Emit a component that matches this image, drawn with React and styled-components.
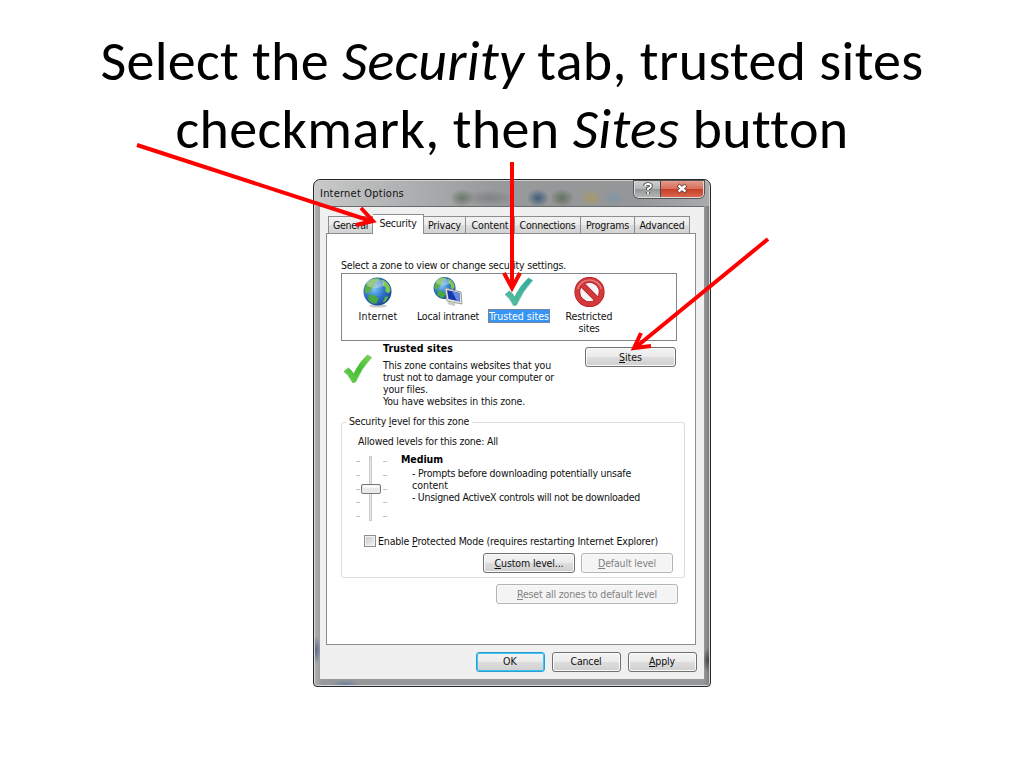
import { useLayoutEffect, useRef } from 'react';
import styled, { createGlobalStyle, css } from 'styled-components';

const GlobalStyle = createGlobalStyle`
    * {
        box-sizing: border-box;
    }
    body {
        margin: 0;
        background: #fff;
        overflow: hidden;
    }
`;

const Slide = styled.main`
    position: relative;
    width: 1024px;
    height: 768px;
    padding-top: 27px;
    background: #fff;
    display: flex;
    flex-direction: column;
    align-items: center;
    color: #000;
`;

const Title = styled.h1`
    margin: 0 0 16px;
    height: 136px;
    font: 400 56px/68px Carlito, Lato, sans-serif;
    text-align: center;
`;

const TitleLine = styled.div`
    height: 68px;
    white-space: pre;
`;

const FitSpan = styled.span`
    display: inline-block;
    white-space: pre;
`;

const Dialog = styled.section`
    width: 398px;
    height: 508px;
    padding: 0 6px 7px;
    border: 1px solid #25292c;
    border-radius: 7px 7px 4px 4px;
    box-shadow: inset 0 0 0 1px #d5d7d8;
    background:
        radial-gradient(ellipse 5px 14px at 2px 470px, #59698a, transparent),
        radial-gradient(ellipse 5px 12px at 394px 480px, #444, transparent),
        radial-gradient(ellipse 14px 4px at 32px 504px, #6d83a0, transparent),
        linear-gradient(90deg, #b0b2b3, #979899 8px, #979899 390px, #747677);
    font: 10.5px/10px "DejaVu Sans Condensed", "DejaVu Sans", sans-serif;
    color: #111;
`;

const TitleBar = styled.header`
    height: 26px;
    margin: 0 -5px;
    padding-left: 5px;
    display: flex;
    justify-content: space-between;
    border-top: 1px solid #d0d0d0;
    border-radius: 6px 6px 0 0;
    background:
        radial-gradient(ellipse 12px 9px at 147px 17px, #6a776b, transparent),
        radial-gradient(ellipse 28px 8px at 174px 17px, #808285, transparent),
        radial-gradient(ellipse 11px 9px at 223px 17px, #3e5d79, transparent),
        radial-gradient(ellipse 12px 9px at 247px 17px, #62715e, transparent),
        radial-gradient(ellipse 11px 9px at 276px 17px, #a89a68, transparent),
        radial-gradient(ellipse 10px 8px at 299px 17px, #7e98a6, transparent),
        linear-gradient(90deg, #c8c9c9, #aeb0b1 90px, #97999a 180px, #949697 320px, #a8aaab);
`;

const DialogTitle = styled.div`
    padding-top: 6px;
    font-size: 11px;
    line-height: 13px;
`;

const Controls = styled.div`
    display: flex;
    height: 17px;
    margin: 0 5px 0 0;
    border: 1px solid #ddd;
    border-top: 0;
    border-radius: 0 0 5px 5px;
    overflow: hidden;
    box-shadow: 0 0 0 1px #555;
`;

const Control = styled.span`
    width: ${({ $close }) => ($close ? 43 : 25)}px;
    display: flex;
    align-items: center;
    justify-content: center;
    border-left: ${({ $close }) => ($close ? '1px solid #544' : '0')};
    background: ${({ $close }) => ($close
        ? 'linear-gradient(#e39c8c, #d8705a 47%, #c63e25 50%, #d9664d)'
        : 'linear-gradient(#cfd0d0, #b5b7b8 47%, #929596 50%, #b2b5b6)')};
    svg {
        margin-top: -2px;
    }
`;

const Client = styled.div`
    height: 473px;
    padding: 7px 7px 0 6px;
    border-top: 1px solid #686b6d;
    background: #f0f0f0;
`;

const Tabs = styled.div`
    height: 19px;
    padding-left: 2px;
    display: flex;
    align-items: flex-end;
`;

const Tab = styled.div`
    width: ${({ $w }) => $w}px;
    height: 17px;
    display: flex;
    align-items: center;
    justify-content: center;
    border: 1px solid #8b8d91;
    border-left-width: ${({ $first }) => ($first ? 1 : 0)}px;
    border-bottom: 0;
    background: linear-gradient(#f2f2f2, #ebebeb 48%, #dedede 52%, #d2d2d2);
    ${({ $active }) => $active && css`
        position: relative;
        height: 20px;
        margin-bottom: -1px;
        padding: 0 0 3px;
        background: #fff;
    `}
`;

const Panel = styled.div`
    width: 370px;
    height: 412px;
    padding: 26px 10px 0 14px;
    border: 1px solid #8b8d91;
    background: #fff;
`;

const ZoneList = styled.div`
    width: 336px;
    height: 68px;
    margin-top: 1px;
    padding: 3px 0 0 1px;
    display: flex;
    border: 1px solid #85878b;
    line-height: 12px;
`;

const Zone = styled.div`
    width: ${({ $w = 70 }) => $w}px;
    display: flex;
    flex-direction: column;
    align-items: center;
    svg {
        display: block;
        margin-bottom: 1px;
    }
`;

const ZoneLabel = styled.div`
    height: ${({ $selected }) => ($selected ? 14 : 12)}px;
    padding: ${({ $selected }) => ($selected ? '1px 1px' : '0')};
    margin-top: ${({ $selected, $next }) => ($selected || $next ? 0 : 1)}px;
    outline: ${({ $selected }) => ($selected ? '1px dotted #b4784c' : '0')};
    outline-offset: -1px;
    background: ${({ $selected }) => ($selected ? '#3595f5' : 'transparent')};
    color: ${({ $selected }) => ($selected ? '#fff' : 'inherit')};
`;

const ZoneInfo = styled.div`
    height: 75px;
    padding-top: 2px;
    display: grid;
    grid-template-columns: 42px 202px 91px;
    > svg {
        margin: 11px 0 0 1px;
    }
`;

const ZoneText = styled.div`
    > div:first-child {
        margin-bottom: 5px;
    }
`;

const Line = styled.div`
    height: 12px;
    font-weight: ${({ $bold }) => ($bold ? 700 : 400)};
    color: ${({ $bold }) => ($bold ? '#000' : 'inherit')};
`;

const Button = styled.button`
    width: ${({ $w = 92 }) => $w}px;
    height: ${({ $h = 20 }) => $h}px;
    margin: 0;
    padding: 0 ${({ $h }) => ($h ? '1px 2px 0' : '0')};
    display: flex;
    align-items: center;
    justify-content: center;
    border: 1px solid #707070;
    border-radius: 3px;
    background: linear-gradient(#f3f3f3, #ebebeb 48%, #dddddd 52%, #cfcfcf);
    box-shadow: inset 0 0 0 1px #fafafa;
    font: inherit;
    color: #111;
    ${({ $default }) => $default && css`
        border-color: #2c9fd0;
        box-shadow: inset 0 0 0 1px #3dc5f2;
    `}
    &:disabled {
        border-color: #b1b4b5;
        background: #f4f4f4;
        color: #838383;
    }
`;

const Group = styled.fieldset`
    width: 344px;
    height: 162px;
    margin: 0;
    padding: 8px 11px 0 16px;
    min-width: 0;
    border: 1px solid #dcdcdc;
    border-radius: 3px;
`;

const Legend = styled.legend`
    height: 12px;
    margin-left: -12px;
    padding: 0 3px;
    line-height: 11px;
`;

const Level = styled.div`
    height: 81px;
    margin-top: 6px;
    display: grid;
    grid-template-columns: 43px 1fr;
    > svg {
        margin: 1px 0 0 -3px;
    }
`;

const LevelText = styled.div`
    > div:first-child {
        margin: 0 0 2px;
    }
`;

const Indented = styled.div`
    padding-left: 11px;
`;

const CheckRow = styled.label`
    height: 12px;
    margin-left: 6px;
    display: flex;
    align-items: center;
    gap: 2px;
`;

const CheckBox = styled.span`
    width: 12px;
    height: 12px;
    border: 1px solid #8e8f8f;
    box-shadow: inset 0 0 0 1px #f4f4f4;
    background: linear-gradient(135deg, #c5cacf, #f4f4f4);
`;

const ButtonRow = styled.div`
    display: flex;
    justify-content: flex-end;
    gap: ${({ $gap = 6 }) => $gap}px;
    margin: ${({ $margin = '0' }) => $margin};
`;

const Arrows = styled.svg`
    position: absolute;
    left: 0;
    top: 0;
    pointer-events: none;
`;

// Spreads the letters so that the text takes exactly w pixels
function Fit({ w, children }) {
    const ref = useRef(null);
    useLayoutEffect(() => {
        const el = ref.current;
        el.style.letterSpacing = '0px';
        const natural = el.getBoundingClientRect().width;
        el.style.letterSpacing = `${(w - natural) / el.textContent.length}px`;
    }, [w]);
    return <FitSpan ref={ref}>{children}</FitSpan>;
}

function Globe({ cx = 16, cy = 16, r = 14 }) {
    return (
        <g transform={`translate(${cx} ${cy}) scale(${r / 14})`}>
            <circle r='14' fill='url(#sea)' />
            <path d='M-11-8C-8-13-2-14 2-13L1-10-3-8-2-5-6-3-8 1-12 2-13-2Z' fill='#5fae45' />
            <path d='M4-12C9-11 13-6 13-1L11 2 8 0 8-4 5-6 6-9Z' fill='#7cc653' />
            <path d='M-9 3-3 4 1 7-1 12-5 12-9 9Z' fill='#4aa83e' />
            <path d='M8 5 11 5 8 10 5 11Z' fill='#62b544' />
            <ellipse cx='-2' cy='-8' rx='9' ry='4.5' fill='#fff' opacity='.35' />
        </g>
    );
}

function InternetIcon() {
    return (
        <svg width='32' height='31' viewBox='0 0 32 31'>
            <defs>
                <radialGradient id='sea' cx='.38' cy='.4' r='.65'>
                    <stop offset='0' stopColor='#7cc6f5' />
                    <stop offset='.55' stopColor='#2f76cb' />
                    <stop offset='1' stopColor='#1a4694' />
                </radialGradient>
            </defs>
            <ellipse cx='16' cy='29' rx='9' ry='1.6' fill='#ccc' />
            <Globe cx={15.5} cy={14.5} />
        </svg>
    );
}

function IntranetIcon() {
    return (
        <svg width='32' height='31' viewBox='0 0 32 31'>
            <Globe cx={12.5} cy={11} r={11} />
            <path d='M13 11 29 15 30 27 15 24Z' fill='#e4e5dc' stroke='#9c9f98' />
            <path d='M15 13 27.5 16 28 24.5 16.5 22Z' fill='#1638ae' />
            <path d='M20 14.2 27.5 16 28 24.5 25 24Z' fill='#668ce0' />
            <path d='M17 25 23 26.5 23 29 15 27Z' fill='#c7c9c4' />
        </svg>
    );
}

function CheckIcon({ green }) {
    return (
        <svg width='32' height='31' viewBox='0 0 32 31'>
            <defs>
                <linearGradient id={green ? 'leaf' : 'teal'} x1='1' y1='0' x2='0' y2='1'>
                    <stop offset='0' stopColor={green ? '#7bd858' : '#2fa89f'} />
                    <stop offset='.5' stopColor={green ? '#46bd33' : '#44b69a'} />
                    <stop offset='1' stopColor={green ? '#69d353' : '#5cbd9e'} />
                </linearGradient>
            </defs>
            <path
                d='M2 17.5 6.5 14Q9.5 16 11.5 20 17.5 8 25.5 1L29.5 3.5Q19.5 14 13.5 28L10.5 28.5Q7 21 2 17.5Z'
                fill={green ? 'url(#leaf)' : 'url(#teal)'}
                stroke={green ? '#54b74b' : '#46aea0'}
                strokeWidth='.7'
            />
        </svg>
    );
}

function RestrictedIcon() {
    return (
        <svg width='32' height='31' viewBox='0 0 32 31'>
            <circle cx='16.5' cy='15' r='12.2' fill='#f6f6f6' stroke='#a91d22' strokeWidth='5.8' />
            <path d='M8.5 7 24.5 23' stroke='#b72327' strokeWidth='6' />
            <circle cx='16.5' cy='15' r='12.2' fill='none' stroke='#d3383b' strokeWidth='4.4' />
            <path d='M8.5 7 24.5 23' stroke='#d3383b' strokeWidth='4.4' />
            <path d='M4.5 12A12.5 12.5 0 0 1 28.5 12' fill='none' stroke='#e27b7b' strokeWidth='1.6' />
        </svg>
    );
}

function Slider() {
    return (
        <svg width='34' height='68' viewBox='0 0 34 68'>
            <path d='M15.5 1V66' stroke='#c9caca' strokeWidth='3' />
            <path d='M15.5 2V65' stroke='#e8e8e8' />
            <path d='M1 6.5H5M1 20.5H5M1 34.5H5M1 47.5H5M1 61.5H5M28 6.5H32M28 20.5H32M28 34.5H32M28 47.5H32M28 61.5H32' stroke='#c3c3c3' />
            <rect x='6.5' y='29.5' width='19' height='9' rx='1.5' fill='#e9e9e9' stroke='#777' />
            <path d='M8 31.5H24' stroke='#fff' strokeWidth='2' />
        </svg>
    );
}

const tabs = [
    { name: 'General', w: 45, text: 35 },
    { name: 'Security', w: 51, text: 37, active: true },
    { name: 'Privacy', w: 42, text: 33 },
    { name: 'Content', w: 49, text: 37 },
    { name: 'Connections', w: 66, text: 56 },
    { name: 'Programs', w: 54, text: 43 },
    { name: 'Advanced', w: 55, text: 45 },
];

function OptionsDialog() {
    return (
        <Dialog>
            <TitleBar>
                <DialogTitle><Fit w={84}>Internet Options</Fit></DialogTitle>
                <Controls>
                    <Control>
                        <svg width='12' height='13' viewBox='0 0 12 13' fill='none'>
                            <path d='M3 4Q3 2 6 2 9 2 9 4 9 5.5 6 6.5V8M6 10V12' stroke='#444' strokeWidth='3.6' />
                            <path d='M3 4Q3 2 6 2 9 2 9 4 9 5.5 6 6.5V8M6 10V12' stroke='#fff' strokeWidth='1.8' />
                        </svg>
                    </Control>
                    <Control $close>
                        <svg width='12' height='11' viewBox='0 0 12 11'>
                            <path d='M2 2 10 9M10 2 2 9' stroke='#633' strokeWidth='4' />
                            <path d='M2.5 2.5 9.5 8.5M9.5 2.5 2.5 8.5' stroke='#fff' strokeWidth='2.4' />
                        </svg>
                    </Control>
                </Controls>
            </TitleBar>
            <Client>
                <Tabs>
                    {tabs.map((tab, i) => (
                        <Tab key={tab.name} $w={tab.w} $first={i === 0} $active={tab.active}>
                            <Fit w={tab.text}>{tab.name}</Fit>
                        </Tab>
                    ))}
                </Tabs>
                <Panel>
                    <Line><Fit w={225}>Select a zone to view or change security settings.</Fit></Line>
                    <ZoneList>
                        <Zone>
                            <InternetIcon />
                            <ZoneLabel><Fit w={39}>Internet</Fit></ZoneLabel>
                        </Zone>
                        <Zone>
                            <IntranetIcon />
                            <ZoneLabel><Fit w={62}>Local intranet</Fit></ZoneLabel>
                        </Zone>
                        <Zone $w={72}>
                            <CheckIcon />
                            <ZoneLabel $selected><Fit w={60}>Trusted sites</Fit></ZoneLabel>
                        </Zone>
                        <Zone $w={68}>
                            <RestrictedIcon />
                            <ZoneLabel><Fit w={47}>Restricted</Fit></ZoneLabel>
                            <ZoneLabel $next><Fit w={21}>sites</Fit></ZoneLabel>
                        </Zone>
                    </ZoneList>
                    <ZoneInfo>
                        <CheckIcon green />
                        <ZoneText>
                            <Line $bold><Fit w={70}>Trusted sites</Fit></Line>
                            <Line><Fit w={168}>This zone contains websites that you</Fit></Line>
                            <Line><Fit w={171}>trust not to damage your computer or</Fit></Line>
                            <Line><Fit w={45}>your files.</Fit></Line>
                            <Line><Fit w={142}>You have websites in this zone.</Fit></Line>
                        </ZoneText>
                        <ButtonRow $margin='4px 0 0'>
                            <Button $w={91}><Fit w={23}><u>S</u>ites</Fit></Button>
                        </ButtonRow>
                    </ZoneInfo>
                    <Group>
                        <Legend><Fit w={120}>Security <u>l</u>evel for this zone</Fit></Legend>
                        <Line><Fit w={140}>Allowed levels for this zone: All</Fit></Line>
                        <Level>
                            <Slider />
                            <LevelText>
                                <Line $bold><Fit w={42}>Medium</Fit></Line>
                                <Indented>
                                    <Line><Fit w={219}>- Prompts before downloading potentially unsafe</Fit></Line>
                                    <Line><Fit w={36}>content</Fit></Line>
                                    <Line><Fit w={228}>- Unsigned ActiveX controls will not be downloaded</Fit></Line>
                                </Indented>
                            </LevelText>
                        </Level>
                        <CheckRow>
                            <CheckBox />
                            <Fit w={280}>Enable <u>P</u>rotected Mode (requires restarting Internet Explorer)</Fit>
                        </CheckRow>
                        <ButtonRow $margin='6px 0 0'>
                            <Button><Fit w={69}><u>C</u>ustom level...</Fit></Button>
                            <Button disabled><Fit w={58}><u>D</u>efault level</Fit></Button>
                        </ButtonRow>
                    </Group>
                    <ButtonRow $margin='6px 7px 0 0'>
                        <Button $w={182} disabled><Fit w={140}><u>R</u>eset all zones to default level</Fit></Button>
                    </ButtonRow>
                </Panel>
                <ButtonRow $gap={7} $margin='7px 0 0'>
                    <Button $w={69} $h={20} $default><Fit w={14}>OK</Fit></Button>
                    <Button $w={69} $h={20}><Fit w={31}>Cancel</Fit></Button>
                    <Button $w={69} $h={20}><Fit w={26}><u>A</u>pply</Fit></Button>
                </ButtonRow>
            </Client>
        </Dialog>
    );
}

function App() {
    return (
        <Slide>
            <GlobalStyle />
            <Title>
                <TitleLine><Fit w={823}>Select the <em>Security</em> tab, trusted sites</Fit></TitleLine>
                <TitleLine><Fit w={672}>checkmark, then <em>Sites</em> button</Fit></TitleLine>
            </Title>
            <OptionsDialog />
            <Arrows width='1024' height='768' fill='none' stroke='#f00' strokeWidth='4'>
                <path d='M137 145 371 221M361 208 373 221 356 225' />
                <path d='M512 162V288M504 273 512 288 520 273' />
                <path d='M768 239 636 347M641 333 634 348 651 346' />
            </Arrows>
        </Slide>
    );
}

export default App;
